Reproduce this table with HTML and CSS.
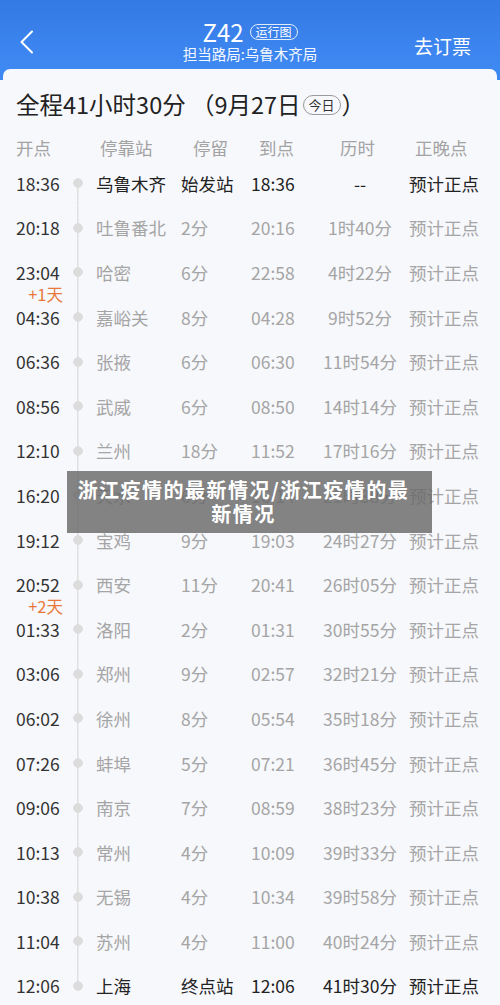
FILE: index.html
```html
<!DOCTYPE html>
<html lang="zh-CN">
<head>
    <meta charset="UTF-8">
    <meta name="viewport" content="width=device-width, initial-scale=1.0">
    <title>Z42 时刻表</title>
    <link rel="stylesheet" href="styles.css">
</head>
<body>
    <div class="topbar">
        <div class="back">
            <svg width="16" height="24" viewBox="0 0 16 24"><path d="M13 1.5 L2.5 12 L13 22.5" fill="none" stroke="#fff" stroke-width="2" stroke-linecap="round" stroke-linejoin="round"/></svg>
        </div>
        <div class="train">
            <div class="train-no">Z42 <span class="pill">运行图</span></div>
            <div class="bureau">担当路局:乌鲁木齐局</div>
        </div>
        <div class="book">去订票</div>
    </div>

    <div class="card">
        <h1 class="total">全程41小时30分 （9月27日<span class="today">今日</span>）</h1>

        <div class="head">
            <span class="h-dep">开点</span>
            <span class="h-sta">停靠站</span>
            <span class="h-stay">停留</span>
            <span class="h-arr">到点</span>
            <span class="h-dur">历时</span>
            <span class="h-late">正晚点</span>
        </div>

        <div class="list">
            <div class="row main first">
                <span class="dep">18:36</span><span class="dot"></span><span class="sta">乌鲁木齐</span><span class="stay">始发站</span><span class="arr">18:36</span><span class="dur">--</span><span class="late">预计正点</span>
            </div>
            <div class="row">
                <span class="dep">20:18</span><span class="dot"></span><span class="sta">吐鲁番北</span><span class="stay">2分</span><span class="arr">20:16</span><span class="dur">1时40分</span><span class="late">预计正点</span>
            </div>
            <div class="row">
                <span class="dep">23:04<em class="plus">+1天</em></span><span class="dot"></span><span class="sta">哈密</span><span class="stay">6分</span><span class="arr">22:58</span><span class="dur">4时22分</span><span class="late">预计正点</span>
            </div>
            <div class="row">
                <span class="dep">04:36</span><span class="dot"></span><span class="sta">嘉峪关</span><span class="stay">8分</span><span class="arr">04:28</span><span class="dur">9时52分</span><span class="late">预计正点</span>
            </div>
            <div class="row">
                <span class="dep">06:36</span><span class="dot"></span><span class="sta">张掖</span><span class="stay">6分</span><span class="arr">06:30</span><span class="dur">11时54分</span><span class="late">预计正点</span>
            </div>
            <div class="row">
                <span class="dep">08:56</span><span class="dot"></span><span class="sta">武威</span><span class="stay">6分</span><span class="arr">08:50</span><span class="dur">14时14分</span><span class="late">预计正点</span>
            </div>
            <div class="row">
                <span class="dep">12:10</span><span class="dot"></span><span class="sta">兰州</span><span class="stay">18分</span><span class="arr">11:52</span><span class="dur">17时16分</span><span class="late">预计正点</span>
            </div>
            <div class="row">
                <span class="dep">16:20</span><span class="dot"></span><span class="sta">天水</span><span class="stay">6分</span><span class="arr">16:14</span><span class="dur">21时38分</span><span class="late">预计正点</span>
            </div>
            <div class="row">
                <span class="dep">19:12</span><span class="dot"></span><span class="sta">宝鸡</span><span class="stay">9分</span><span class="arr">19:03</span><span class="dur">24时27分</span><span class="late">预计正点</span>
            </div>
            <div class="row">
                <span class="dep">20:52<em class="plus">+2天</em></span><span class="dot"></span><span class="sta">西安</span><span class="stay">11分</span><span class="arr">20:41</span><span class="dur">26时05分</span><span class="late">预计正点</span>
            </div>
            <div class="row">
                <span class="dep">01:33</span><span class="dot"></span><span class="sta">洛阳</span><span class="stay">2分</span><span class="arr">01:31</span><span class="dur">30时55分</span><span class="late">预计正点</span>
            </div>
            <div class="row">
                <span class="dep">03:06</span><span class="dot"></span><span class="sta">郑州</span><span class="stay">9分</span><span class="arr">02:57</span><span class="dur">32时21分</span><span class="late">预计正点</span>
            </div>
            <div class="row">
                <span class="dep">06:02</span><span class="dot"></span><span class="sta">徐州</span><span class="stay">8分</span><span class="arr">05:54</span><span class="dur">35时18分</span><span class="late">预计正点</span>
            </div>
            <div class="row">
                <span class="dep">07:26</span><span class="dot"></span><span class="sta">蚌埠</span><span class="stay">5分</span><span class="arr">07:21</span><span class="dur">36时45分</span><span class="late">预计正点</span>
            </div>
            <div class="row">
                <span class="dep">09:06</span><span class="dot"></span><span class="sta">南京</span><span class="stay">7分</span><span class="arr">08:59</span><span class="dur">38时23分</span><span class="late">预计正点</span>
            </div>
            <div class="row">
                <span class="dep">10:13</span><span class="dot"></span><span class="sta">常州</span><span class="stay">4分</span><span class="arr">10:09</span><span class="dur">39时33分</span><span class="late">预计正点</span>
            </div>
            <div class="row">
                <span class="dep">10:38</span><span class="dot"></span><span class="sta">无锡</span><span class="stay">4分</span><span class="arr">10:34</span><span class="dur">39时58分</span><span class="late">预计正点</span>
            </div>
            <div class="row">
                <span class="dep">11:04</span><span class="dot"></span><span class="sta">苏州</span><span class="stay">4分</span><span class="arr">11:00</span><span class="dur">40时24分</span><span class="late">预计正点</span>
            </div>
            <div class="row main last">
                <span class="dep">12:06</span><span class="dot"></span><span class="sta">上海</span><span class="stay">终点站</span><span class="arr">12:06</span><span class="dur">41时30分</span><span class="late">预计正点</span>
            </div>
        </div>
    </div>

    <div class="banner">浙江疫情的最新情况/浙江疫情的最新情况</div>
</body>
</html>
```

FILE: styles.css
```css
body {
    margin: 0;
    font-family: "Noto Sans CJK SC", "Noto Sans", sans-serif;
    background: linear-gradient(#3a80ec 0, #3d88f2 80px, #f7f8fc 80px);
    color: #333;
}
.topbar {
    height: 69px;
    display: flex;
    align-items: flex-start;
    color: #fff;
    background: linear-gradient(180deg, #3479e4, #3f89f3);
}
.back {
    width: 90px;
    padding: 30px 0 0 19px;
    box-sizing: border-box;
}
.train {
    flex: 1;
    text-align: center;
    padding-top: 18px;
}
.train-no {
    font-size: 24px;
    line-height: 27px;
    display: flex;
    justify-content: center;
    align-items: center;
    gap: 6px;
}
.pill {
    font-size: 12px;
    line-height: 14px;
    border: 1px solid rgba(255,255,255,0.85);
    border-radius: 8px;
    padding: 0 5px;
    margin-top: 1px;
}
.bureau {
    font-size: 14.5px;
    line-height: 16px;
    margin-top: 1px;
    opacity: 0.95;
}
.book {
    width: 90px;
    font-size: 19px;
    padding: 33px 0 0 4px;
    line-height: 26px;
    box-sizing: border-box;
}
.card {
    background: #f7f8fc;
    margin: 0 3px;
    border-radius: 7px 7px 0 0;
    padding: 18px 0 0 13px;
    height: 936px;
    box-sizing: border-box;
}
.total {
    margin: 0;
    font-size: 23.5px;
    font-weight: normal;
    color: #222;
    line-height: 34px;
    display: flex;
    align-items: center;
    height: 34px;
}
.today {
    font-size: 13px;
    line-height: 18px;
    border: 1px solid #999;
    border-radius: 10px;
    padding: 0 5px;
    margin: 2px 1px 0 2px;
    color: #333;
}
.head {
    display: flex;
    font-size: 17.5px;
    color: #a3a3a3;
    height: 26px;
    line-height: 26px;
    margin-top: 14px;
}
.h-dep { width: 84px; }
.h-sta { width: 93px; }
.h-stay { width: 66px; }
.h-arr { width: 81px; }
.h-dur { width: 75px; }
.h-late { width: 70px; }
.row {
    display: flex;
    height: 44.6px;
    align-items: center;
    font-size: 17.5px;
    color: #a5a5a5;
}
.row span {
    white-space: nowrap;
}
.dep {
    width: 50px;
    color: #333;
    position: relative;
    text-align: left;
}
.plus {
    font-style: normal;
    color: #e8793e;
    font-size: 16.5px;
    position: absolute;
    right: 3px;
    top: 22px;
}
.dot {
    width: 24px;
    align-self: stretch;
    background: radial-gradient(circle, #dcdcdc 4.5px, transparent 5px) center / 12px 12px no-repeat,
                linear-gradient(#e0e0e0, #e0e0e0) center / 1.5px 100% no-repeat;
}
.first .dot {
    background: radial-gradient(circle, #dcdcdc 4.5px, transparent 5px) center / 12px 12px no-repeat,
                linear-gradient(#e0e0e0, #e0e0e0) center bottom / 1.5px 50% no-repeat;
}
.last .dot {
    background: radial-gradient(circle, #dcdcdc 4.5px, transparent 5px) center / 12px 12px no-repeat,
                linear-gradient(#e0e0e0, #e0e0e0) center top / 1.5px 50% no-repeat;
}
.sta { width: 85px; padding-left: 6px; }
.stay { width: 70px; }
.arr { width: 66px; }
.dur { width: 86px; text-align: center; }
.late { padding-left: 6px; }
.main { color: #222; }
.banner {
    position: absolute;
    left: 67px;
    top: 471px;
    width: 365px;
    height: 62px;
    box-sizing: border-box;
    padding: 7px 20px 0 8px;
    background: rgba(105,105,105,0.82);
    color: #fff;
    font-weight: bold;
    font-size: 20px;
    letter-spacing: 1.5px;
    line-height: 24px;
    text-align: center;
}
```
